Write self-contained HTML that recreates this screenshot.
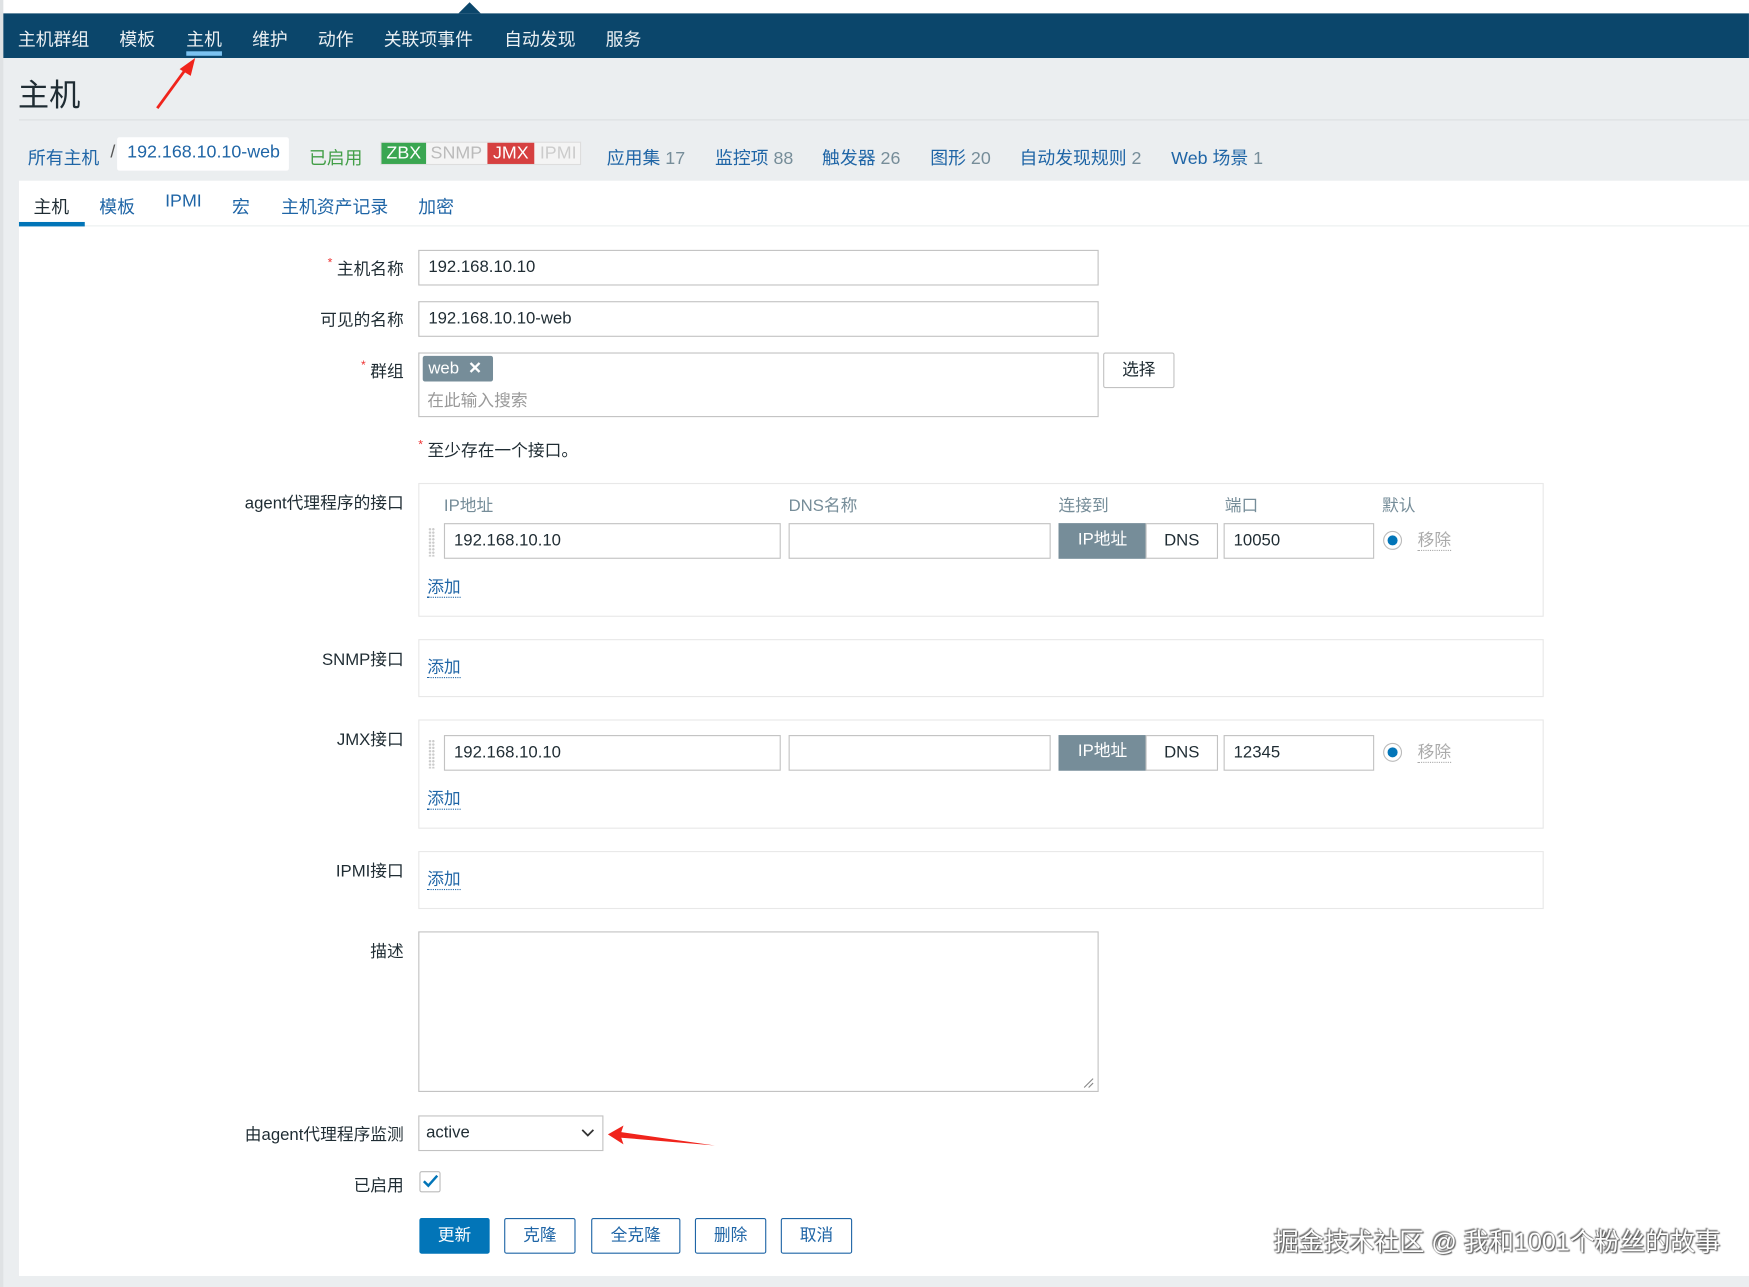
<!DOCTYPE html>
<html><head><meta charset="utf-8">
<style>
html,body{margin:0;padding:0;width:1749px;height:1287px;overflow:hidden;background:#ebeef0;}
#w{position:absolute;left:0;top:0;width:1568px;height:1154px;transform:scale(1.1154);transform-origin:0 0;font-family:"Liberation Sans","Noto Sans CJK SC",sans-serif;font-size:15px;color:#1f2c33;background:#ebeef0;}
.a{position:absolute;white-space:nowrap;}
.nav{left:3px;top:12px;width:1565px;height:40px;background:#0b466b;}
.nav span{position:absolute;top:10px;color:#fff;font-size:16px;opacity:.92}
.lnk{color:#1f65a6}
.inp{position:absolute;background:#fff;border:1px solid #c2c2c2;box-sizing:border-box;height:32px;line-height:30px;padding-left:8px;font-size:15px;}
.lab{position:absolute;text-align:right;right:1206px;font-size:15px;}
.star{color:#e33;font-size:11px;vertical-align:top;margin-right:4px}
.box{position:absolute;left:375px;width:1009px;border:1px solid #e8e8e8;box-sizing:border-box;background:#fff}
.add{position:absolute;color:#1f65a6;border-bottom:1px dotted #1f65a6;line-height:17px;font-size:15px}
.btn{position:absolute;top:1092px;height:32px;box-sizing:border-box;border:1px solid #1f65a6;color:#1f65a6;background:#fff;border-radius:2px;text-align:center;line-height:30px;font-size:15px}
.seg1{position:absolute;background:#768d99;color:#fff;text-align:center;line-height:30px;height:32px;box-sizing:border-box}
.seg2{position:absolute;background:#fff;border:1px solid #c2c2c2;text-align:center;line-height:30px;height:32px;box-sizing:border-box}
.radio{position:absolute;width:17px;height:17px;border:1px solid #bbb;border-radius:50%;box-sizing:border-box;background:#fff}
.radio:after{content:"";position:absolute;left:3px;top:3px;width:9px;height:9px;border-radius:50%;background:#0275b8}
.grip{position:absolute;width:6px;height:26px;background-image:radial-gradient(#ccc 1px,transparent 1.2px);background-size:3px 3px}
.rm{position:absolute;color:#aaa;border-bottom:1px dotted #aaa;line-height:17px}
.hdr{position:absolute;top:442px;color:#768d99;font-size:15px}
</style></head><body><div id="w">
<div class="a" style="left:0;top:0;width:1568px;height:12px;background:#fff"></div>
<div class="a" style="left:0;top:0;width:3px;height:1154px;background:#dfe2e4"></div>
<div class="a" style="left:411px;top:2px;width:0;height:0;border-left:10px solid transparent;border-right:10px solid transparent;border-bottom:10px solid #0b466b"></div>
<div class="a nav">
<span style="left:13px">主机群组</span><span style="left:104px">模板</span><span style="left:164px">主机</span><span style="left:223px">维护</span><span style="left:282px">动作</span><span style="left:341px">关联项事件</span><span style="left:449px">自动发现</span><span style="left:540px">服务</span>
<div style="position:absolute;left:164px;top:34px;width:32px;height:4px;background:#7bc2f0"></div>
</div>
<svg class="a" style="left:135px;top:50px" width="45" height="50"><path d="M6 47 L33 10" stroke="#f0241c" stroke-width="2.5"/><path d="M40 2 L26 12 L36 18 Z" fill="#f0241c"/></svg>
<div class="a" style="left:16px;top:64px;font-size:28px;color:#1f2c33">主机</div>
<div class="a" style="left:17px;top:107px;width:1551px;height:1px;background:#dcdfe1"></div>
<div class="a lnk" style="left:25px;top:128px;font-size:16px">所有主机</div>
<div class="a" style="left:99px;top:128px;font-size:16px;color:#555">/</div>
<div class="a" style="left:105px;top:123px;width:154px;height:30px;background:#fff;border-radius:2px"></div>
<div class="a lnk" style="left:114px;top:128px;font-size:16px">192.168.10.10-web</div>
<div class="a" style="left:277px;top:128px;font-size:16px;color:#429e47">已启用</div>
<div class="a" style="left:341px;top:127px;width:180px;height:21px;border:1px solid #ddd;box-sizing:border-box;background:#f4f4f4"></div>
<div class="a" style="left:342px;top:128px;width:40px;height:19px;background:#3aa651;color:#fff;font-size:16px;text-align:center;line-height:19px">ZBX</div>
<div class="a" style="left:386px;top:128px;color:#bbb;font-size:16px;line-height:19px">SNMP</div>
<div class="a" style="left:437px;top:128px;width:42px;height:19px;background:#d64040;color:#fff;font-size:16px;text-align:center;line-height:19px">JMX</div>
<div class="a" style="left:484px;top:128px;color:#ccc;font-size:16px;line-height:19px">IPMI</div>
<div class="a lnk" style="left:544px;top:128px;font-size:16px">应用集 <span style="color:#768d99">17</span></div>
<div class="a lnk" style="left:641px;top:128px;font-size:16px">监控项 <span style="color:#768d99">88</span></div>
<div class="a lnk" style="left:737px;top:128px;font-size:16px">触发器 <span style="color:#768d99">26</span></div>
<div class="a lnk" style="left:834px;top:128px;font-size:16px">图形 <span style="color:#768d99">20</span></div>
<div class="a lnk" style="left:914px;top:128px;font-size:16px">自动发现规则 <span style="color:#768d99">2</span></div>
<div class="a lnk" style="left:1050px;top:128px;font-size:16px">Web 场景 <span style="color:#768d99">1</span></div>
<div class="a" style="left:17px;top:162px;width:1551px;height:982px;background:#fff"></div>
<div class="a" style="left:17px;top:202px;width:1551px;height:1px;background:#ebeef0"></div>
<div class="a" style="left:30px;top:172px;font-size:16px">主机</div>
<div class="a" style="left:17px;top:199px;width:59px;height:4px;background:#0275b8"></div>
<div class="a lnk" style="left:89px;top:172px;font-size:16px">模板</div>
<div class="a lnk" style="left:148px;top:172px;font-size:16px">IPMI</div>
<div class="a lnk" style="left:208px;top:172px;font-size:16px">宏</div>
<div class="a lnk" style="left:252px;top:172px;font-size:16px">主机资产记录</div>
<div class="a lnk" style="left:375px;top:172px;font-size:16px">加密</div>

<div class="lab" style="top:230px"><span class="star">*</span>主机名称</div>
<div class="inp" style="left:375px;top:224px;width:610px">192.168.10.10</div>
<div class="lab" style="top:276px">可见的名称</div>
<div class="inp" style="left:375px;top:270px;width:610px">192.168.10.10-web</div>
<div class="lab" style="top:322px"><span class="star">*</span>群组</div>
<div class="inp" style="left:375px;top:316px;width:610px;height:58px;padding:0"></div>
<div class="a" style="left:379px;top:319px;width:63px;height:23px;background:#768d99;color:#fff;border-radius:2px;line-height:23px;padding-left:5px;box-sizing:border-box">web <b style="margin-left:4px">✕</b></div>
<div class="a" style="left:383px;top:348px;color:#999">在此输入搜索</div>
<div class="a" style="left:989px;top:316px;width:64px;height:32px;border:1px solid #c2c2c2;box-sizing:border-box;background:#fff;text-align:center;line-height:30px;border-radius:2px">选择</div>
<div class="a" style="left:375px;top:393px"><span class="star">*</span>至少存在一个接口。</div>

<div class="lab" style="top:440px">agent代理程序的接口</div>
<div class="box" style="top:433px;height:120px"></div>
<div class="hdr" style="left:398px">IP地址</div><div class="hdr" style="left:707px">DNS名称</div><div class="hdr" style="left:949px">连接到</div><div class="hdr" style="left:1098px">端口</div><div class="hdr" style="left:1239px">默认</div>
<div class="grip" style="left:384px;top:473px"></div>
<div class="inp" style="left:398px;top:469px;width:302px">192.168.10.10</div>
<div class="inp" style="left:707px;top:469px;width:235px"></div>
<div class="seg1" style="left:949px;top:469px;width:79px">IP地址</div>
<div class="seg2" style="left:1027px;top:469px;width:65px">DNS</div>
<div class="inp" style="left:1097px;top:469px;width:135px">10050</div>
<div class="radio" style="left:1240px;top:476px"></div>
<div class="rm" style="left:1271px;top:476px">移除</div>
<div class="add" style="left:383px;top:518px">添加</div>

<div class="lab" style="top:580px">SNMP接口</div>
<div class="box" style="top:573px;height:52px"></div>
<div class="add" style="left:383px;top:590px">添加</div>

<div class="lab" style="top:652px">JMX接口</div>
<div class="box" style="top:645px;height:98px"></div>
<div class="grip" style="left:384px;top:663px"></div>
<div class="inp" style="left:398px;top:659px;width:302px">192.168.10.10</div>
<div class="inp" style="left:707px;top:659px;width:235px"></div>
<div class="seg1" style="left:949px;top:659px;width:79px">IP地址</div>
<div class="seg2" style="left:1027px;top:659px;width:65px">DNS</div>
<div class="inp" style="left:1097px;top:659px;width:135px">12345</div>
<div class="radio" style="left:1240px;top:666px"></div>
<div class="rm" style="left:1271px;top:666px">移除</div>
<div class="add" style="left:383px;top:708px">添加</div>

<div class="lab" style="top:770px">IPMI接口</div>
<div class="box" style="top:763px;height:52px"></div>
<div class="add" style="left:383px;top:780px">添加</div>

<div class="lab" style="top:842px">描述</div>
<div class="inp" style="left:375px;top:835px;width:610px;height:144px"></div>
<svg class="a" style="left:970px;top:965px" width="12" height="12"><path d="M2 10 L10 2 M6 10 L10 6" stroke="#888" stroke-width="1"/></svg>

<div class="lab" style="top:1006px">由agent代理程序监测</div>
<div class="inp" style="left:375px;top:1000px;width:166px;padding-left:6px">active</div>
<svg class="a" style="left:521px;top:1011px" width="12" height="10"><path d="M1 2 L6 7 L11 2" stroke="#333" stroke-width="1.6" fill="none"/></svg>
<svg class="a" style="left:543px;top:1006px" width="100" height="24"><path d="M2 11 L16 3 L14 9 L98 21 L14 14 L16 20 Z" fill="#f0241c"/></svg>
<div class="lab" style="top:1052px">已启用</div>
<div class="a" style="left:376px;top:1050px;width:19px;height:19px;border:1px solid #bbb;box-sizing:border-box;background:#fff;border-radius:2px"></div>
<svg class="a" style="left:378px;top:1052px" width="16" height="14"><path d="M2 7 L6 11 L14 2" stroke="#0275b8" stroke-width="2.2" fill="none"/></svg>

<div class="btn" style="left:376px;width:63px;background:#0275b8;color:#fff;border-color:#0275b8">更新</div>
<div class="btn" style="left:452px;width:64px">克隆</div>
<div class="btn" style="left:530px;width:80px">全克隆</div>
<div class="btn" style="left:623px;width:64px">删除</div>
<div class="btn" style="left:700px;width:64px">取消</div>
<div class="a" style="left:1142px;top:1096px;font-size:22.5px;color:#fff;text-shadow:0 0 1px #555,1px 1px 1px #555,-1px -1px 1px #777;letter-spacing:0">掘金技术社区 @ 我和1001个粉丝的故事</div>
</div></body></html>
